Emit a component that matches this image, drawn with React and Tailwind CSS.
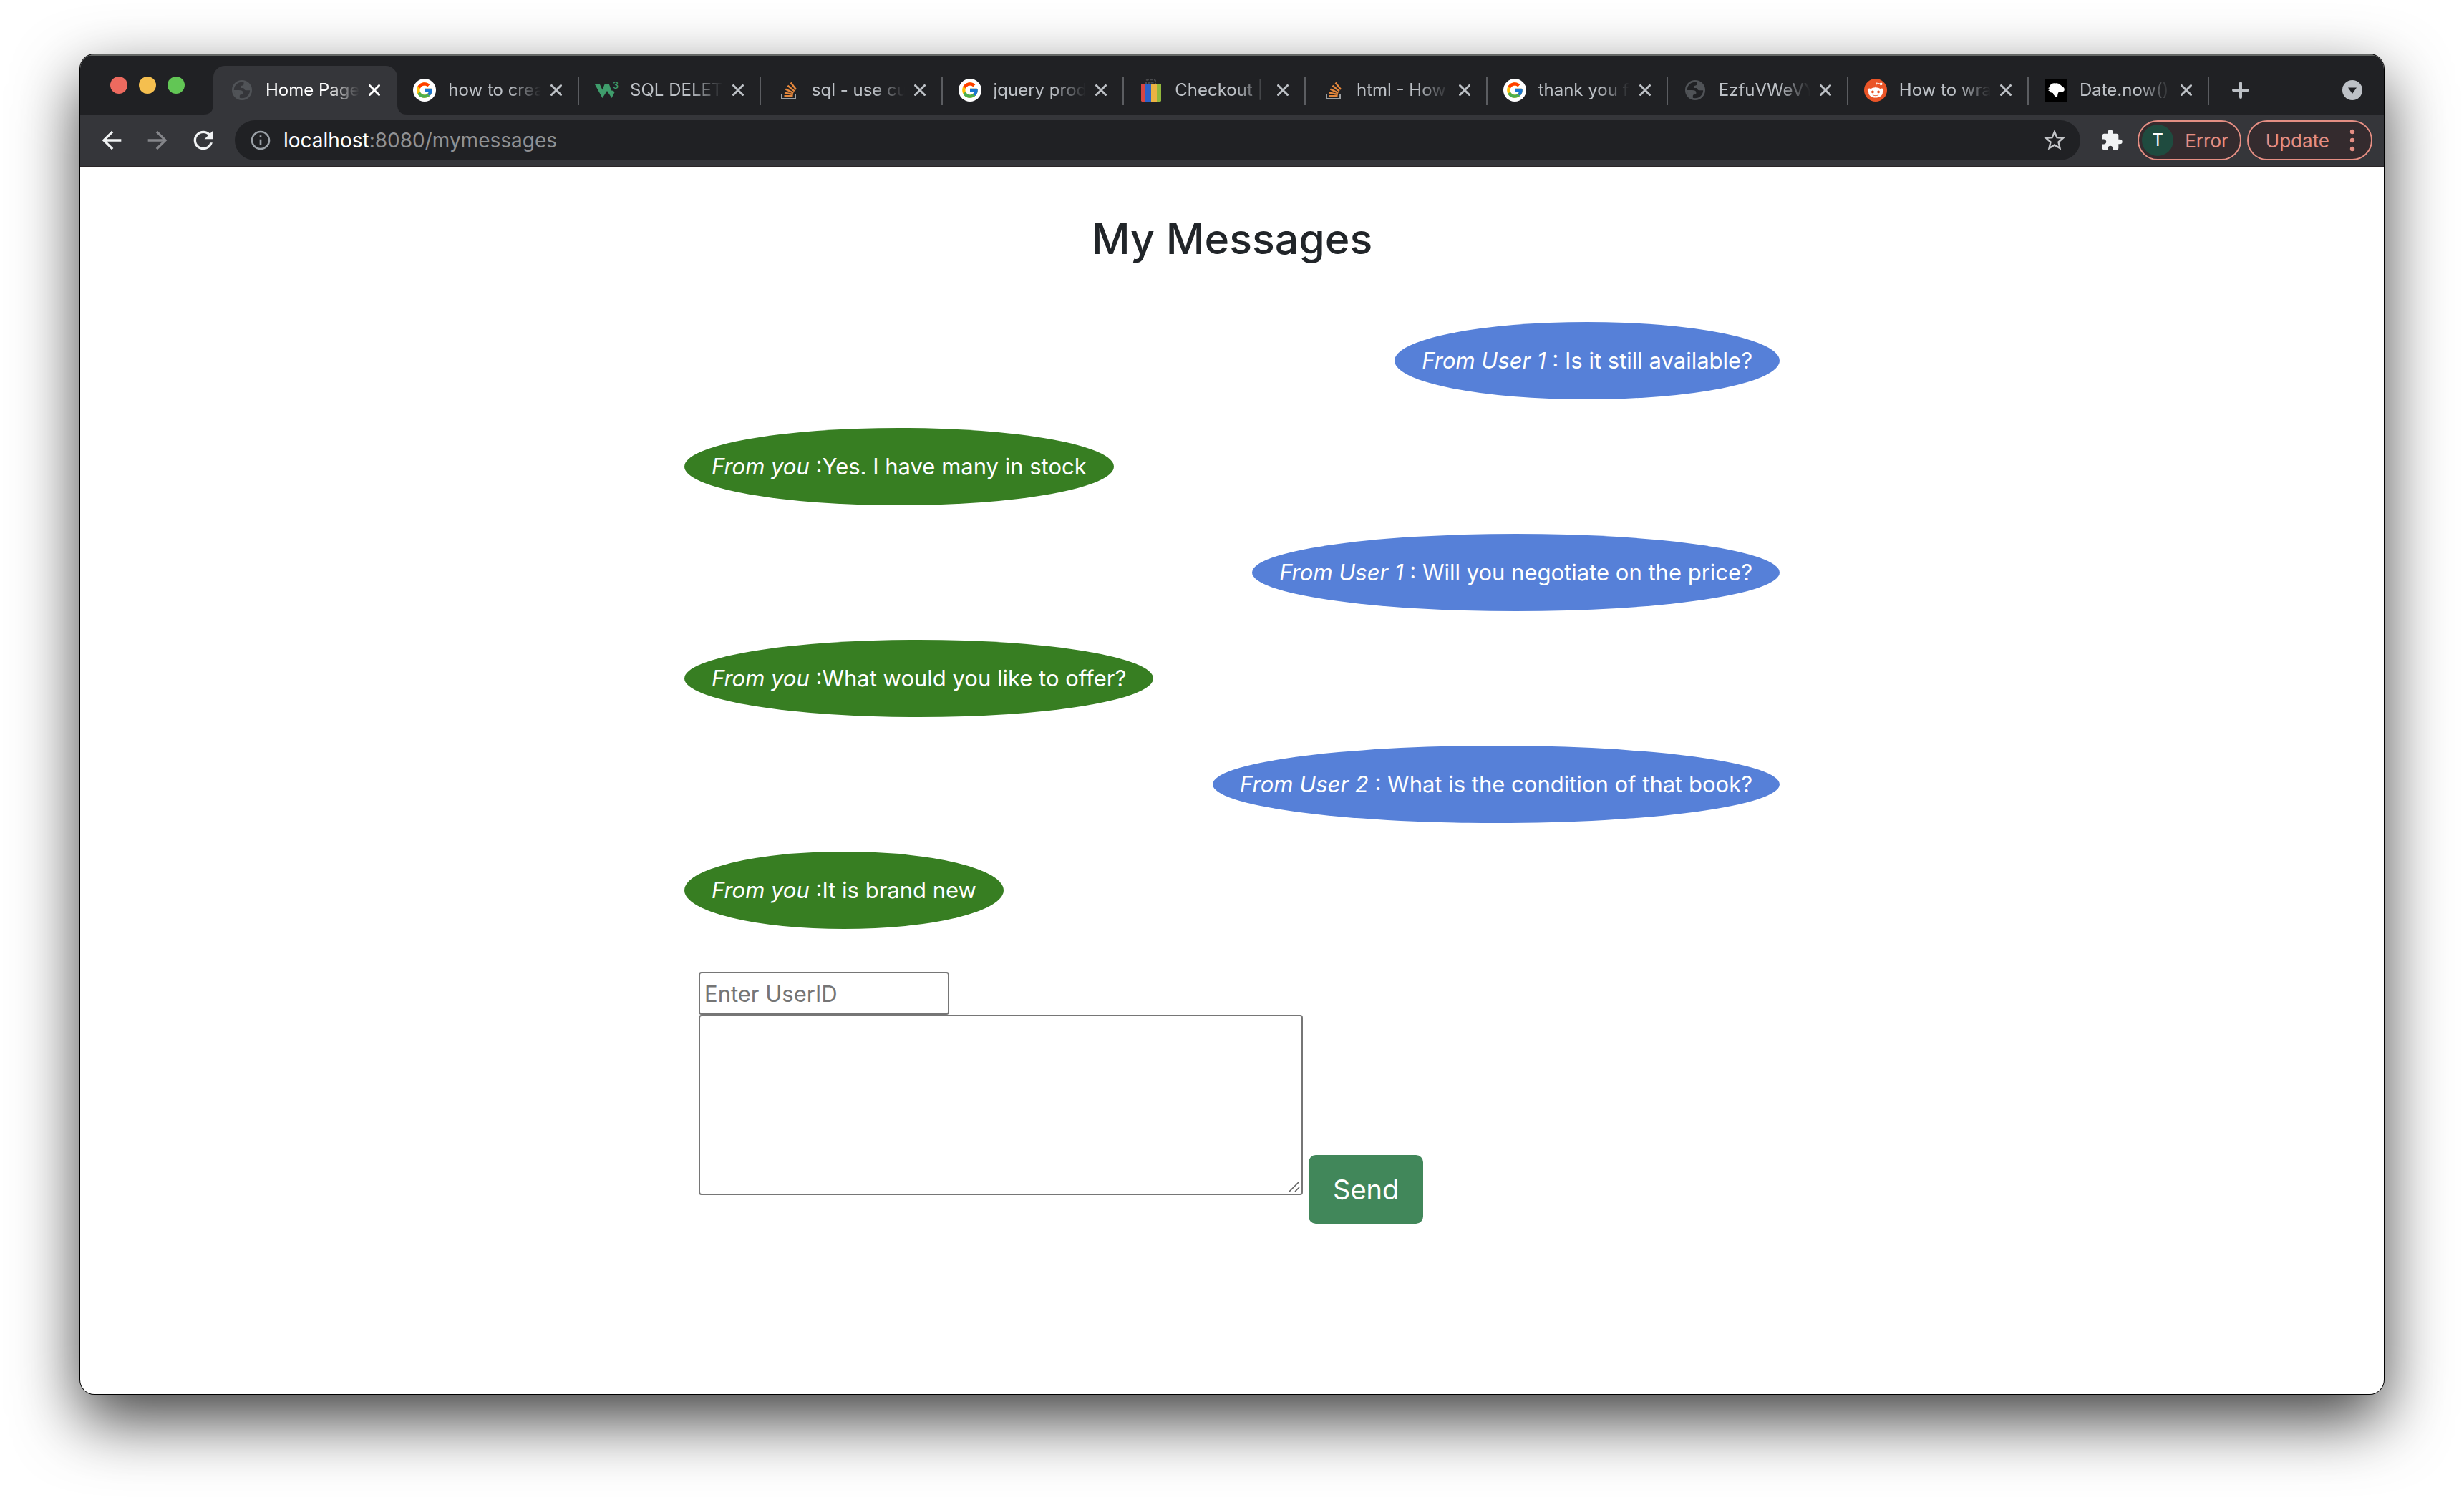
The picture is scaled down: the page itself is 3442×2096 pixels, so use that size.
import { FcGoogle } from "react-icons/fc";
import { FaRedditAlien } from "react-icons/fa";
import {
  MdArrowBack,
  MdArrowForward,
  MdExtension,
  MdInfoOutline,
  MdRefresh,
  MdStarOutline,
} from "react-icons/md";

function GlobeIcon() {
  return (
    <svg viewBox="0 0 28 28" className="size-7" aria-hidden="true">
      <circle cx="14" cy="14" r="12.6" fill="none" stroke="#505357" strokeWidth="2.8" />
      <path
        fill="#505357"
        d="M16.5 2.5 V5.5 Q16.5 7.2 14.8 7.4 Q12 7.6 12 9.8 Q12 11 13.4 11 H15.4 Q16.6 11 17 12.2 Q17.6 14.2 19.6 14.2 H26 V9 L21 3.5 Z M2 14 H9.5 Q15.4 14 15.4 17.2 V18.4 Q15.4 20 13.4 20 Q10.8 20 10.8 22.4 V26 L5 23 Z"
      />
    </svg>
  );
}

function GoogleIcon() {
  return (
    <span className="flex size-8 items-center justify-center rounded-full bg-white">
      <FcGoogle className="size-[26px]" />
    </span>
  );
}

function W3Icon() {
  return (
    <svg viewBox="0 0 32 32" className="size-8 overflow-visible" aria-hidden="true">
      <path
        fill="#3f9d6c"
        d="M0 8 H7 L10.5 15.5 L13.5 8 H20 L23 16.5 Q26.5 16 27.5 19 L23.5 27 L17 17 L10.5 27 Z"
      />
      <text x="25" y="14" fontSize="13" fontFamily="Inter, sans-serif" fontWeight="500" fill="#3f9d6c">
        3
      </text>
    </svg>
  );
}

function StackOverflowIcon() {
  return (
    <svg viewBox="0 0 32 32" className="size-8" aria-hidden="true" fill="none">
      <path d="M7 21 V28 H26 V21" stroke="#9da0a3" strokeWidth="2" />
      <g stroke="#e6883c" strokeWidth="2.4">
        <path d="M10.5 24.2 H22.5" />
        <path d="M11 19.6 L22.8 22" />
        <path d="M12.4 14.6 L23.4 19.8" />
        <path d="M15.4 9.8 L24.8 17.4" />
        <path d="M19.6 5.4 L27 15" />
      </g>
    </svg>
  );
}

function BagIcon() {
  return (
    <svg viewBox="0 0 32 32" className="size-8" aria-hidden="true">
      <path
        d="M9 8 V4 Q9 1.2 12 1.2 H19 Q22 1.2 22 4 V8 M12.5 8 V5.5 H18.5 V8"
        fill="none"
        stroke="#4a4b4e"
        strokeWidth="2"
        strokeDasharray="4 1.5"
      />
      <path d="M2 8 H8 V32 H3 L2 31 Z" fill="#d64641" />
      <path d="M8 8 H16 V32 H8 Z" fill="#2c62c9" />
      <path d="M16 8 H24 V32 H16 Z" fill="#ecb243" />
      <path d="M24 8 H30 V31 L29 32 H24 Z" fill="#92b73c" />
    </svg>
  );
}

function RedditIcon() {
  return (
    <span className="flex size-8 items-center justify-center rounded-full bg-[#ea5528]">
      <FaRedditAlien className="size-6 text-white" />
    </span>
  );
}

function MdnIcon() {
  return (
    <svg viewBox="0 0 32 32" className="size-8" aria-hidden="true">
      <rect width="32" height="32" fill="#000" />
      <path
        fill="#fff"
        d="M8 9 Q10 6 15 6.4 Q20 5.6 22.4 8.8 Q24.5 11 27 12.5 Q28.6 14 27.4 17 Q25.5 19 22.5 18.6 L19.6 19 Q18 21 18 26.5 Q13 24 11.8 20 Q8.5 19.5 6.6 18.6 L8.2 17.6 L5 16.8 L7 15.4 L4 14.2 L6.8 13 L4.8 11.4 L7.6 11 Z"
      />
    </svg>
  );
}

function CloseIcon() {
  return (
    <svg viewBox="0 0 16 16" className="size-4" aria-hidden="true">
      <path d="M1.5 1.5 L14.5 14.5 M14.5 1.5 L1.5 14.5" stroke="currentColor" strokeWidth="3" strokeLinecap="round" />
    </svg>
  );
}

const tabs = [
  { title: "Home Page", icon: GlobeIcon, size: "flex-[128]", active: true },
  { title: "how to crea", icon: GoogleIcon, size: "flex-[127]" },
  { title: "SQL DELET", icon: W3Icon, size: "flex-[127]" },
  { title: "sql - use cu", icon: StackOverflowIcon, size: "flex-[127]" },
  { title: "jquery prod", icon: GoogleIcon, size: "flex-[127]" },
  { title: "Checkout |", icon: BagIcon, size: "flex-[127]" },
  { title: "html - How", icon: StackOverflowIcon, size: "flex-[127]" },
  { title: "thank you f", icon: GoogleIcon, size: "flex-[126]" },
  { title: "EzfuVWeVY", icon: GlobeIcon, size: "flex-[126]" },
  { title: "How to wra", icon: RedditIcon, size: "flex-[126]" },
  { title: "Date.now()", icon: MdnIcon, size: "flex-[126]" },
];

function Flare({ className }) {
  return (
    <svg viewBox="0 0 14 14" className={className} aria-hidden="true">
      <path d="M14 0 V14 H0 Q14 14 14 0 Z" fill="#35363a" />
    </svg>
  );
}

function Tab({ title, icon: Icon, size, active }) {
  return (
    <div
      className={
        (active ? "rounded-t-2xl bg-[#35363a] pl-6 text-white " : "pl-[22px] text-[#bdc1c6] ") +
        "relative flex h-[68px] min-w-0 items-center pr-6 " +
        size
      }
    >
      {active && (
        <>
          <Flare className="absolute bottom-0 -left-3.5 size-3.5" />
          <Flare className="absolute -right-3.5 bottom-0 size-3.5 -scale-x-100" />
        </>
      )}
      <span className="flex size-8 shrink-0 items-center justify-center">
        <Icon />
      </span>
      <span className="ml-[17px] min-w-0 flex-1 overflow-hidden mask-r-from-65% mask-r-to-100% text-2xl whitespace-nowrap">
        {title}
      </span>
      <button type="button" aria-label={"Close " + title} className="ml-[13px] shrink-0">
        <CloseIcon />
      </button>
      {!active && <span className="absolute top-[15px] right-0 h-10 w-0.5 bg-[#5b5d61]" />}
    </div>
  );
}

function TabStrip() {
  return (
    <div className="flex h-[84px] items-end bg-[#202124] pr-[30px] pl-[42px] shadow-[inset_0_2px_0_#646765]">
      <div className="mb-[29px] flex w-36 shrink-0 gap-4">
        <span className="size-6 rounded-full bg-[#ed6a5f]" />
        <span className="size-6 rounded-full bg-[#f5bf4f]" />
        <span className="size-6 rounded-full bg-[#62c655]" />
      </div>
      <div className="flex min-w-0 flex-1">
        {tabs.map((tab) => (
          <Tab key={tab.title} {...tab} />
        ))}
      </div>
      <div className="flex h-[68px] w-[214px] shrink-0 items-center justify-between pl-8">
        <button type="button" aria-label="New tab">
          <svg viewBox="0 0 24 24" className="size-6" aria-hidden="true">
            <path d="M12 2 V22 M2 12 H22" stroke="#bdc1c6" strokeWidth="4" strokeLinecap="round" />
          </svg>
        </button>
        <button type="button" aria-label="Search tabs">
          <svg viewBox="0 0 28 28" className="size-7" aria-hidden="true">
            <circle cx="14" cy="14" r="14" fill="#bdc1c6" />
            <path d="M8 10.5 H20 L14 19 Z" fill="#202124" />
          </svg>
        </button>
      </div>
    </div>
  );
}

function Toolbar() {
  return (
    <div className="flex items-center border-b-2 border-[#2a2527] bg-[#35363a] pt-2 pr-4 pb-2 pl-6">
      <div className="flex shrink-0 items-center gap-6 text-[#f1f3f4]">
        <button type="button" aria-label="Back">
          <MdArrowBack className="size-10" />
        </button>
        <button type="button" aria-label="Forward" className="text-[#85868a]">
          <MdArrowForward className="size-10" />
        </button>
        <button type="button" aria-label="Reload">
          <MdRefresh className="size-10" />
        </button>
      </div>
      <div className="ml-6 flex h-14 min-w-0 flex-1 items-center rounded-full bg-[#202124] pr-[18px] pl-5">
        <MdInfoOutline className="size-8 shrink-0 text-[#9aa0a6]" />
        <p className="ml-4 flex-1 text-[28px] leading-8 text-[#8f9194]">
          <span className="text-white">localhost</span>:8080/mymessages
        </p>
        <button type="button" aria-label="Bookmark this page">
          <MdStarOutline className="size-9 text-[#c3c5c8]" />
        </button>
      </div>
      <button type="button" aria-label="Extensions" className="ml-7 shrink-0">
        <MdExtension className="size-8 text-[#f1f3f4]" />
      </button>
      <button
        type="button"
        className="ml-5 flex h-14 shrink-0 items-center gap-4 rounded-full border-2 border-[#e58e83] bg-[#342b2e] pr-4 pl-1 text-[26px] text-[#e58e83]"
      >
        <span className="flex size-11 items-center justify-center rounded-full bg-[#1f4b3f] text-2xl text-white">
          T
        </span>
        Error
      </button>
      <button
        type="button"
        className="ml-2 flex h-14 shrink-0 items-center gap-7 rounded-full border-2 border-[#e58e83] bg-[#342b2e] pr-[22px] pl-6 text-[26px] text-[#e58e83]"
      >
        Update
        <svg viewBox="0 0 8 32" className="h-8 w-2" fill="currentColor" aria-hidden="true">
          <circle cx="4" cy="4" r="3.2" />
          <circle cx="4" cy="16" r="3.2" />
          <circle cx="4" cy="28" r="3.2" />
        </svg>
      </button>
    </div>
  );
}

const messages = [
  { from: "From User 1", text: " : Is it still available?" },
  { from: "From you", text: " :Yes. I have many in stock", mine: true },
  { from: "From User 1", text: " : Will you negotiate on the price?" },
  { from: "From you", text: " :What would you like to offer?", mine: true },
  { from: "From User 2", text: " : What is the condition of that book?" },
  { from: "From you", text: " :It is brand new", mine: true },
];

function Message({ from, text, mine }) {
  return (
    <li
      className={
        mine
          ? "self-start rounded-[50%] bg-[#377e22] px-[38px] py-[30px]"
          : "self-end rounded-[50%] bg-[#5680d8] px-[38px] py-[30px]"
      }
    >
      <i>{from}</i>
      {text}
    </li>
  );
}

function MessageForm() {
  return (
    <form className="mt-[60px] ml-5" onSubmit={(e) => e.preventDefault()}>
      <input
        type="text"
        aria-label="User ID"
        placeholder="Enter UserID"
        className="block h-[60px] w-[350px] rounded-[4px] border-2 border-[#767676] px-1.5 text-[31px] placeholder:text-[#757575]"
      />
      <div className="flex items-end gap-2">
        <div className="relative mb-10">
          <textarea
            aria-label="Message"
            className="block h-[252px] w-[844px] resize-none rounded-[4px] border-2 border-[#767676] p-1.5 text-[31px]"
          />
          <svg viewBox="0 0 16 16" className="absolute right-1 bottom-1 size-4" aria-hidden="true">
            <path d="M1 15 L15 1 M9 15 L15 9" stroke="#5f5f5f" strokeWidth="1.6" />
          </svg>
        </div>
        <button
          type="submit"
          className="h-24 rounded-[10px] bg-[#41875a] px-[34px] text-[38px] text-white"
        >
          Send
        </button>
      </div>
    </form>
  );
}

export default function App() {
  return (
    <div className="flex min-h-screen flex-col bg-white px-28 pt-[76px] pb-[148px] font-[Inter,sans-serif]">
      <div className="flex flex-1 flex-col overflow-hidden rounded-[20px] bg-white shadow-[0_0_0_1px_#000,0_36px_90px_rgba(0,0,0,0.75)]">
        <header>
          <TabStrip />
          <Toolbar />
        </header>
        <main className="mx-auto w-full max-w-[1530px] pt-16 text-[#212529]">
          <h1 className="text-center text-[59px] leading-[72px] font-medium">My Messages</h1>
          <ul className="mt-20 flex flex-col gap-10 text-[31px] leading-[48px] text-white">
            {messages.map((message) => (
              <Message key={message.text} {...message} />
            ))}
          </ul>
          <MessageForm />
        </main>
      </div>
    </div>
  );
}
